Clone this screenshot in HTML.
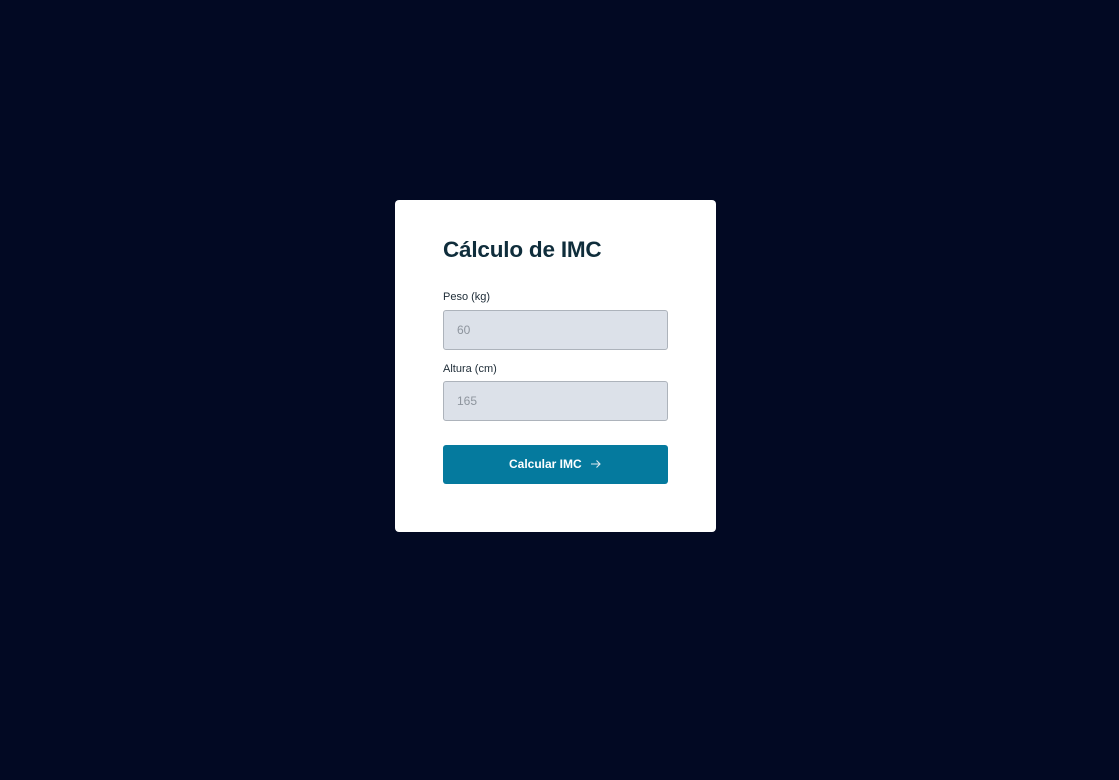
<!DOCTYPE html>
<html><head><style>
html,body{margin:0;height:780px;background:#020923;font-family:"Liberation Sans",sans-serif;}
.card{position:absolute;left:395px;top:200px;width:321px;height:332px;background:#fff;border-radius:4px;}
h1{position:absolute;left:48px;top:37px;margin:0;font-size:22.5px;font-weight:bold;color:#0f2d3b;letter-spacing:-0.2px;}
.lbl{position:absolute;left:48px;font-size:11px;color:#1d2b36;}
.in{position:absolute;left:48px;width:225px;height:40px;background:#dce1e9;border:1px solid #adb3bb;border-radius:3px;box-sizing:border-box;font-size:12px;color:#8e959e;padding-left:13px;line-height:38px;}
.btn{position:absolute;left:48px;top:245px;width:225px;height:39px;background:#057a9e;border-radius:3px;color:#fff;font-size:12px;font-weight:bold;text-align:center;line-height:39px;}
</style></head><body>
<div class="card">
<h1>Cálculo de IMC</h1>
<div class="lbl" style="top:91px">Peso (kg)</div>
<div class="in" style="top:110px">60</div>
<div class="lbl" style="top:163px">Altura (cm)</div>
<div class="in" style="top:181px">165</div>
<div class="btn">Calcular IMC <svg width="12" height="10" viewBox="0 0 12 10" style="margin-left:5px;vertical-align:-1px"><path d="M1 5H10M6.5 1.5L10 5L6.5 8.5" stroke="#dfeaf0" stroke-width="1.1" fill="none"/></svg></div>
</div>
</body></html>
